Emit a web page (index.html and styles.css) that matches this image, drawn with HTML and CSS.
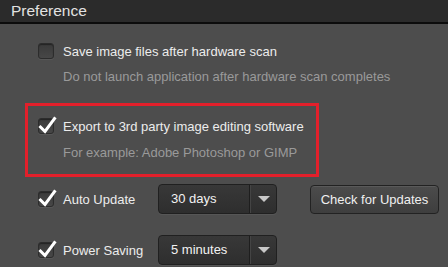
FILE: index.html
```html
<!DOCTYPE html>
<html lang="en">

    <head>
        <meta charset="UTF-8">
        <meta name="viewport" content="width=device-width, initial-scale=1.0">
        <title>Preference</title>
        <link rel="stylesheet" href="styles.css">
    </head>

    <body>
        <div class="header">Preference</div>
        <div class="content">
            <div class="option">
                <div class="option-row">
                    <span class="checkbox"></span>
                    <span class="label">Save image files after hardware scan</span>
                </div>
                <div class="hint">Do not launch application after hardware scan completes</div>
            </div>

            <div class="option highlight">
                <div class="option-row">
                    <span class="checkbox checked">
                        <svg class="tick" width="20" height="20" viewBox="0 0 20 20"><path d="M3.5 12 L8 16.5 L17.5 3.5" fill="none" stroke="#fff" stroke-width="3" stroke-linecap="square"/></svg>
                    </span>
                    <span class="label">Export to 3rd party image editing software</span>
                </div>
                <div class="hint">For example: Adobe Photoshop or GIMP</div>
            </div>

            <div class="setting">
                <span class="checkbox checked">
                    <svg class="tick" width="20" height="20" viewBox="0 0 20 20"><path d="M3.5 12 L8 16.5 L17.5 3.5" fill="none" stroke="#fff" stroke-width="3" stroke-linecap="square"/></svg>
                </span>
                <span class="setting-label">Auto Update</span>
                <div class="dropdown">
                    <span class="value">30 days</span>
                    <span class="arrow"></span>
                </div>
                <button class="btn">Check for Updates</button>
            </div>

            <div class="setting">
                <span class="checkbox checked">
                    <svg class="tick" width="20" height="20" viewBox="0 0 20 20"><path d="M3.5 12 L8 16.5 L17.5 3.5" fill="none" stroke="#fff" stroke-width="3" stroke-linecap="square"/></svg>
                </span>
                <span class="setting-label">Power Saving</span>
                <div class="dropdown">
                    <span class="value">5 minutes</span>
                    <span class="arrow"></span>
                </div>
            </div>
        </div>
    </body>

</html>
```

FILE: styles.css
```css
body {
    font-family: "Liberation Sans", Arial, sans-serif;
    font-size: 13px;
    background-color: #4d4d4d;
    color: #ececec;
    margin: 0;
    height: 267px;
    overflow: hidden;
}

.header {
    height: 22px;
    line-height: 21px;
    padding-left: 11px;
    font-size: 15.5px;
    color: #e2e2e2;
    background-color: #2b2b2b;
    border-bottom: 2px solid #0c0c0c;
}

.content {
    padding: 19px 0 0 25px;
}

.option {
    padding-left: 13px;
}

.option-row {
    display: flex;
    align-items: center;
    height: 16px;
}

.label {
    margin-left: 9px;
}

.hint {
    margin-top: 10px;
    padding-left: 25px;
    line-height: 16px;
    color: #9a9a9a;
}

.highlight {
    width: 278px;
    margin-top: 18px;
    padding: 12px 0 13px 10px;
    border: 3px solid #e3202b;
}

.highlight .hint {
    margin-top: 11px;
}

.checkbox {
    position: relative;
    width: 14px;
    height: 14px;
    flex-shrink: 0;
    border: 1px solid #2c2c2c;
    border-radius: 3px;
    background: linear-gradient(#3a3a3a, #474747);
    box-shadow: inset 0 1px 1px rgba(0, 0, 0, 0.4), 0 1px 0 rgba(255, 255, 255, 0.06);
}

.tick {
    position: absolute;
    left: -2px;
    top: -4px;
}

.setting {
    display: flex;
    align-items: center;
    height: 30px;
    margin-top: 7px;
    padding-left: 13px;
}

.setting + .setting {
    margin-top: 21px;
}

.setting-label {
    width: 95px;
    margin-left: 9px;
    flex-shrink: 0;
}

.dropdown {
    display: flex;
    width: 117px;
    height: 28px;
    border: 1px solid #202020;
    border-radius: 4px;
    background: linear-gradient(#383838, #2e2e2e);
    box-shadow: 0 1px 0 rgba(255, 255, 255, 0.05);
}

.value {
    width: 78px;
    padding-left: 12px;
    line-height: 28px;
    font-size: 13px;
    color: #f2f2f2;
    border-right: 1px solid #1e1e1e;
}

.arrow {
    flex: 1;
    position: relative;
    border-left: 1px solid #444;
}

.arrow::after {
    content: "";
    position: absolute;
    left: 7px;
    top: 11px;
    border-left: 6px solid transparent;
    border-right: 6px solid transparent;
    border-top: 6px solid #c8c8c8;
}

.btn {
    margin-left: 33px;
    width: 129px;
    height: 29px;
    padding: 0;
    font-family: "Liberation Sans", Arial, sans-serif;
    font-size: 13px;
    color: #f0f0f0;
    border: 1px solid #222;
    border-radius: 4px;
    background: linear-gradient(#4c4c4c, #3e3e3e);
    box-shadow: inset 0 1px 0 rgba(255, 255, 255, 0.08);
}
```
